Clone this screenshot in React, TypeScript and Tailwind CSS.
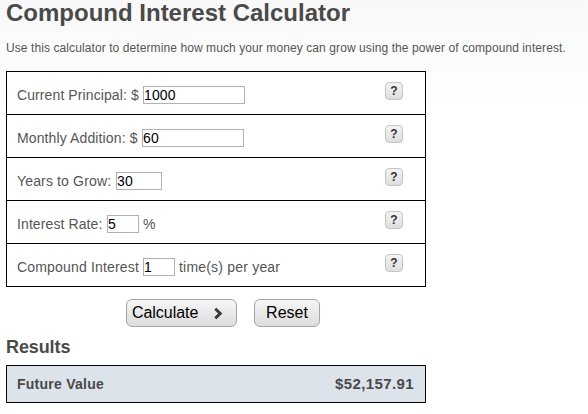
import React from 'react';

type Row = { label: string; labelClass: string; value: string; inputClass: string; suffix?: string };

const rows: Row[] = [
  { label: 'Current Principal: $', labelClass: 'w-[126px] tracking-[0.1px]', value: '1000', inputClass: 'w-[102px]' },
  { label: 'Monthly Addition: $', labelClass: 'w-[125px] tracking-[0.12px]', value: '60', inputClass: 'w-[102px]' },
  { label: 'Years to Grow:', labelClass: 'w-[99px] tracking-[0.15px]', value: '30', inputClass: 'w-[46px]' },
  { label: 'Interest Rate:', labelClass: 'w-[90px] tracking-[0.1px]', value: '5', inputClass: 'w-[32px]', suffix: '%' },
  { label: 'Compound Interest', labelClass: 'w-[126px] tracking-[0.17px]', value: '1', inputClass: 'w-[32px]', suffix: 'time(s) per year' },
];

function HelpButton() {
  return (
    <button className="mt-[10px] mr-[22px] flex h-[18px] w-[18px] items-center justify-center rounded-[4px] border border-[#c4c4c4] bg-linear-to-b from-[#f4f4f4] to-[#dedede] text-[12px] leading-none font-bold text-[#333]">
      ?
    </button>
  );
}

function FieldRow({ label, labelClass, value, inputClass, suffix }: Row) {
  return (
    <div className="flex h-[43px] items-start border-t border-black pl-[10px]">
      <label className="mt-[14px] flex h-[18px] items-center text-[14px] leading-[18px] whitespace-nowrap">
        <span className={labelClass}>{label}</span>
        <input
          defaultValue={value}
          className={`h-[18px] border border-[#b5b0b0] bg-white p-0 text-[14px] leading-[16px] tracking-[0.1px] text-black outline-none ${inputClass}`}
        />
        {suffix && <span className="ml-1 tracking-[0.2px]">{suffix}</span>}
      </label>
      <div className="ml-auto">
        <HelpButton />
      </div>
    </div>
  );
}

export default function App() {
  return (
    <main className="h-[414px] w-[588px] overflow-hidden bg-linear-to-b from-[#f8f8f8] to-white to-[110px] pl-[6px] font-['Liberation_Sans',Arial,sans-serif] text-[#555]">
      <h1 className="h-[38px] text-[24px] leading-[26px] font-bold whitespace-nowrap text-[#4a4a4a]">
        Compound Interest Calculator
      </h1>
      <p className="h-[33px] text-[12px] leading-[20px] tracking-[0.09px] whitespace-nowrap">
        Use this calculator to determine how much your money can grow using the power of compound interest.
      </p>
      <form className="w-[420px] border-x border-b border-black bg-white">
        {rows.map((row) => (
          <FieldRow key={row.label} {...row} />
        ))}
      </form>
      <div className="mt-[12px] flex h-[28px] gap-[17px] pl-[120px] text-[16px] text-black">
        <button className="flex w-[111px] items-center rounded-[6px] border border-[#a5a5a5] bg-linear-to-b from-[#f6f6f6] to-[#dcdcdc] pl-[5px]">
          <span className="w-[82px] text-left tracking-[-0.05px]">Calculate</span>
          <svg width="9" height="12" viewBox="0 0 9 12" fill="none" stroke="#3a3a3a" strokeWidth="3">
            <path d="M1.3 1.7 6.2 6.5 1.3 11.3" />
          </svg>
        </button>
        <button className="w-[66px] rounded-[6px] border border-[#a5a5a5] bg-linear-to-b from-[#f6f6f6] to-[#dcdcdc]">
          Reset
        </button>
      </div>
      <h2 className="mt-[10px] h-[28px] text-[18px] leading-[20px] font-bold tracking-[-0.1px] text-[#4a4a4a]">Results</h2>
      <div className="flex h-[38px] w-[420px] items-center justify-between border border-black bg-[#dce3ea] pr-[11px] pl-[10px] text-[14px] font-bold text-[#4a4a4a]">
        <span className="tracking-[0.25px]">Future Value</span>
        <span className="text-[15px] tracking-[0.4px]">$52,157.91</span>
      </div>
    </main>
  );
}
